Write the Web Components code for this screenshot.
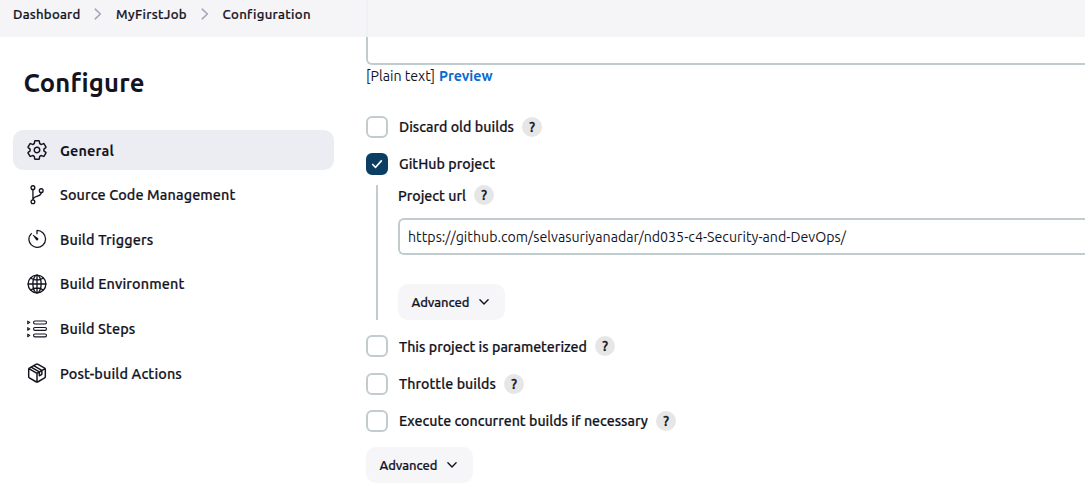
<!DOCTYPE html>
<html lang="en">
<head>
<meta charset="utf-8">
<title>MyFirstJob Config</title>
<style>
html,body{margin:0;height:100%;overflow:hidden;background:#fff}
body{font-family:Ubuntu,"Noto Sans","Open Sans",sans-serif;font-size:14.2px;color:#14141f}
</style>
</head>
<body>
<config-page></config-page>
<script>
const define = (name, html, setup) => {
  const t = document.createElement('template');
  t.innerHTML = html;
  customElements.define(name, class extends HTMLElement {
    constructor() {
      super();
      this.attachShadow({mode: 'open'}).append(t.content.cloneNode(true));
    }
    connectedCallback() { if (setup) setup(this, this.shadowRoot); }
  });
};

/* Text with a set measure: tracking is adjusted so the run fills it. */
define('fit-text', `<style>:host{display:inline-block;white-space:pre;flex:none}span{display:inline-block;white-space:pre}</style><span><slot></slot></span>`, (el, root) => {
  const s = root.querySelector('span'), w = +el.getAttribute('w'), n = el.textContent.length;
  el.style.width = w + 'px';
  s.style.letterSpacing = ((w - s.getBoundingClientRect().width) / n) + 'px';
});

const I = {
  gear: `<path stroke-width="34" d="M262.29 192.31a64 64 0 1057.4 57.4 64.13 64.13 0 00-57.4-57.4zM416.39 256a154.34 154.34 0 01-1.53 20.79l45.21 35.46a10.81 10.81 0 012.45 13.75l-42.77 74a10.81 10.81 0 01-13.14 4.59l-44.9-18.08a16.11 16.11 0 00-15.17 1.75A164.48 164.48 0 01325 400.8a15.94 15.94 0 00-8.82 12.14l-6.73 47.89a11.08 11.08 0 01-10.68 9.17h-85.54a11.11 11.11 0 01-10.69-8.87l-6.72-47.82a16.07 16.07 0 00-9-12.22 155.3 155.3 0 01-21.46-12.57 16 16 0 00-15.11-1.71l-44.89 18.07a10.81 10.81 0 01-13.14-4.58l-42.77-74a10.8 10.8 0 012.45-13.75l38.21-30a16.05 16.05 0 006-14.08c-.36-4.17-.58-8.33-.58-12.5s.21-8.27.58-12.35a16 16 0 00-6.07-13.94l-38.19-30A10.81 10.81 0 0149.48 186l42.77-74a10.81 10.81 0 0113.14-4.59l44.9 18.08a16.11 16.11 0 0015.17-1.75A164.48 164.48 0 01187 111.2a15.94 15.94 0 008.82-12.14l6.73-47.89A11.08 11.08 0 01213.23 42h85.54a11.11 11.11 0 0110.69 8.87l6.72 47.82a16.07 16.07 0 009 12.22 155.3 155.3 0 0121.46 12.57 16 16 0 0015.11 1.71l44.89-18.07a10.81 10.81 0 0113.14 4.58l42.77 74a10.8 10.8 0 01-2.45 13.75l-38.21 30a16.05 16.05 0 00-6.05 14.08c.33 4.14.55 8.3.55 12.47z"/>`,
  branch: `<g stroke-width="34"><circle cx="152" cy="68" r="48"/><circle cx="152" cy="428" r="48"/><circle cx="364" cy="144" r="48"/><path d="M152 380V116M364 192c0 130-212 70-212 188"/></g>`,
  timer: `<path stroke-width="32" d="M112.9 118.9a200 200 0 00-64 160c9.800 94.100 93 180 191.400 189.200C363 480 476 385 476 256.900c0-120-98-221-220.200-221v86"/><path fill="currentColor" stroke="none" d="M233.4 278.6l-85-119a8.2 8.2 0 0111.3-11.3l119 85a32 32 0 01-37.2 52.1 33 33 0 01-8.1-6.8z"/>`,
  globe: `<g stroke-width="34"><circle cx="256" cy="256" r="228"/><ellipse cx="256" cy="256" rx="106" ry="228"/><path d="M256 28v456M28 256h456M104 108c42 29 92 46 152 46s110-17 152-46M104 404c42-29 92-46 152-46s110 17 152 46"/></g>`,
  steps: `<g stroke-width="28"><rect x="168" y="50" width="330" height="76" rx="34"/><rect x="168" y="216" width="330" height="76" rx="34"/><rect x="168" y="382" width="330" height="76" rx="34"/><path stroke-width="26" d="M18 54l54 34-54 34zM18 220l54 34-54 34zM18 386l54 34-54 34z"/></g>`,
  cube: `<g stroke-width="34" transform="translate(-28 -28) scale(1.11)"><path d="M448 341.4V170.6A32 32 0 00432.1 143l-152-88.5a48 48 0 00-48.2 0l-152 88.5A32 32 0 0064 170.6v170.8A32 32 0 0079.9 369l152 88.5a48 48 0 0048.2 0l152-88.5a32 32 0 0015.9-27.600zM69 153l187 111 187-111M256 463V264M120 120l190 111v90l58-34v-91L179 85"/></g>`
};

define('page-crumbs', `<style>
:host{display:flex;align-items:flex-start;height:37px;box-sizing:border-box;padding:4px 0 0 13px;background:rgba(244,244,247,.92);position:relative;z-index:2;font-size:13.2px;line-height:20px;font-weight:500;-webkit-text-stroke:.2px currentColor}
svg{width:8px;height:12px;flex:none;margin:4px 14px 0 13.5px;fill:none;stroke:#a5a5b7;stroke-width:1.6;stroke-linecap:round;stroke-linejoin:round}
</style><fit-text w="67.5">Dashboard</fit-text><svg viewBox="0 0 8 12"><path d="M1.2 1.200L6.400 6l-5.200 4.800"/></svg><fit-text w="71">MyFirstJob</fit-text><svg viewBox="0 0 8 12"><path d="M1.200 1.200L6.400 6l-5.200 4.800"/></svg><fit-text w="88">Configuration</fit-text>`);

define('nav-item', `<style>
:host{display:flex;align-items:center;height:40px;border-radius:10px;padding-left:14px;gap:13px;font-size:14.4px;font-weight:500;line-height:20px;-webkit-text-stroke:.2px currentColor}
:host([active]){background:#ecedf3;font-weight:700;-webkit-text-stroke:0}
svg{width:20px;height:20px;overflow:visible;flex:none;fill:none;stroke:currentColor;stroke-linecap:round;stroke-linejoin:round}
::slotted(*){padding-top:1px}
</style><svg viewBox="0 0 512 512"></svg><slot></slot>`, (el, root) => {
  const svg = root.querySelector('svg');
  svg.innerHTML = I[el.getAttribute('icon')];
  if (el.getAttribute('icon') === 'gear') svg.setAttribute('viewBox', '24 24 464 464');
});

define('side-nav', `<style>
:host{display:block;padding:28px 0 0 13px;width:321px}
h1{margin:0 0 29px 10.5px;font-size:25.6px;line-height:36px;font-weight:700}
nav{display:grid;gap:4.650px}
</style><h1><fit-text w="120.5">Configure</fit-text></h1><nav>
<nav-item icon="gear" active><fit-text w="54">General</fit-text></nav-item>
<nav-item icon="branch"><fit-text w="175.5">Source Code Management</fit-text></nav-item>
<nav-item icon="timer"><fit-text w="93.5">Build Triggers</fit-text></nav-item>
<nav-item icon="globe"><fit-text w="124.5">Build Environment</fit-text></nav-item>
<nav-item icon="steps"><fit-text w="75.5">Build Steps</fit-text></nav-item>
<nav-item icon="cube"><fit-text w="122">Post-build Actions</fit-text></nav-item></nav>`);

define('help-dot', `<style>:host{display:flex;align-items:center;justify-content:center;width:20px;height:20px;border-radius:50%;background:#e6e6e6;font-size:14px;line-height:20px;font-weight:500;-webkit-text-stroke:.3px currentColor;flex:none}</style>?`);

define('check-row', `<style>
:host{display:flex;align-items:center;height:22px;line-height:22px;font-weight:500;-webkit-text-stroke:.2px currentColor}
i{display:block;box-sizing:border-box;width:22px;height:22px;border:2px solid #c1cccf;border-radius:6px;margin-right:11px;flex:none}
svg{display:none;width:22px;height:22px;margin:-2px;fill:none;stroke:#fff;stroke-width:1.7;stroke-linecap:round;stroke-linejoin:round}
:host([checked]) i{background:#0b3e63;border-color:#0b3e63}
:host([checked]) svg{display:block}
:host([low]) ::slotted(*){padding-top:2px}
help-dot{margin-left:8px}
:host([nohelp]) help-dot{display:none}
</style><i><svg viewBox="0 0 22 22"><path d="M6.700 11.500l2.900 2.800 5.700-6.400"/></svg></i><slot></slot><help-dot></help-dot>`);

define('more-button', `<style>
:host{display:flex;align-items:center;box-sizing:border-box;width:107px;height:36px;border-radius:10px;background:#f6f6f9;padding-left:13.500px;gap:8.500px;font-size:13px;line-height:20px;font-weight:500;-webkit-text-stroke:.2px currentColor}
svg{width:12px;height:8px;fill:none;stroke:currentColor;stroke-width:1.400;stroke-linecap:round;stroke-linejoin:round}
</style><fit-text w="58">Advanced</fit-text><svg viewBox="0 0 12 8"><path d="M1.900 1.800L6 5.900 10.100 1.800"/></svg>`);

define('config-form', `<style>
:host{display:block;margin-top:-37px;padding-left:32px;min-width:0}
.area{height:65px;box-sizing:border-box;border:solid #c1cccf;border-width:0 0 2px 2px;border-bottom-left-radius:6px}
.fmt{display:flex;gap:4px;line-height:22px;height:22px;margin-bottom:29px}
.fmt b{color:#0b6ace}
.group{margin:10px 0 15px 10px;height:135px;box-sizing:border-box;border-left:2px solid #c1cccf;padding-left:20px}
.label{display:flex;gap:8px;font-weight:500;line-height:20px;height:20px;margin-bottom:13px;-webkit-text-stroke:.2px currentColor}
.label fit-text{padding-top:1px}
.input{height:37px;box-sizing:border-box;border:2px solid #c1cccf;border-right:0;border-radius:6px 0 0 6px;padding-left:8px;line-height:34px;margin-bottom:29px}
.gap{margin-bottom:15px}.gap2{margin-bottom:16px}
</style>
<div class="area"></div>
<div class="fmt"><fit-text w="69">[Plain text]</fit-text><b><fit-text w="53.500">Preview</fit-text></b></div>
<check-row class="gap"><fit-text w="115">Discard old builds</fit-text></check-row>
<check-row checked nohelp><fit-text w="96">GitHub project</fit-text></check-row>
<div class="group"><div class="label"><fit-text w="68">Project url</fit-text><help-dot></help-dot></div>
<div class="input"><fit-text w="438">https://github.com/selvasuriyanadar/nd035-c4-Security-and-DevOps/</fit-text></div>
<more-button></more-button></div>
<check-row class="gap2" low><fit-text w="188">This project is parameterized</fit-text></check-row>
<check-row class="gap"><fit-text w="97">Throttle builds</fit-text></check-row>
<check-row class="gap"><fit-text w="249">Execute concurrent builds if necessary</fit-text></check-row>
<more-button></more-button>`);

define('config-page', `<style>
:host{display:block;height:504px;overflow:hidden}
.body{display:grid;grid-template-columns:334px 1fr}
</style><page-crumbs></page-crumbs><div class="body"><side-nav></side-nav><config-form></config-form></div>`);
</script>
</body>
</html>
